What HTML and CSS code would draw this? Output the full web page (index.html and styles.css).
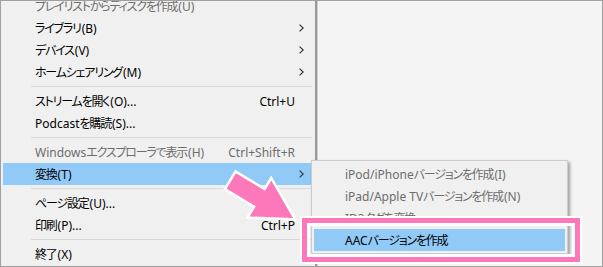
FILE: index.html
```html
<!DOCTYPE html>
<html lang="ja">
<head>
    <meta charset="UTF-8">
    <title>変換メニュー</title>
    <link rel="stylesheet" href="styles.css">
</head>
<body>
    <div class="window">
        <div class="menu">
            <ul class="items">
                <li class="item disabled"><span class="label"><span class="jp">プレイリストからディスクを作成</span>(U)</span><span class="sub"></span></li>
                <li class="item"><span class="label"><span class="jp">ライブラリ</span>(B)</span><span class="sub"><svg width="5" height="8" viewBox="0 0 5 8"><path d="M0.6 0.6 L4.2 4 L0.6 7.4" /></svg></span></li>
                <li class="item"><span class="label"><span class="jp">デバイス</span>(V)</span><span class="sub"><svg width="5" height="8" viewBox="0 0 5 8"><path d="M0.6 0.6 L4.2 4 L0.6 7.4" /></svg></span></li>
                <li class="item"><span class="label"><span class="jp">ホームシェアリング</span>(M)</span><span class="sub"><svg width="5" height="8" viewBox="0 0 5 8"><path d="M0.6 0.6 L4.2 4 L0.6 7.4" /></svg></span></li>
                <li class="sep"></li>
                <li class="item"><span class="label"><span class="jp">ストリームを開く</span>(O)...</span><span class="key">Ctrl+U</span><span class="sub"></span></li>
                <li class="item"><span class="label">Podcast<span class="jp">を購読</span>(S)...</span><span class="sub"></span></li>
                <li class="sep"></li>
                <li class="item disabled"><span class="label">Windows<span class="jp">エクスプローラで表示</span>(H)</span><span class="key">Ctrl+Shift+R</span><span class="sub"></span></li>
                <li class="item active"><span class="label"><span class="jp">変換</span>(T)</span><span class="sub"><svg width="5" height="8" viewBox="0 0 5 8"><path d="M0.6 0.6 L4.2 4 L0.6 7.4" /></svg></span></li>
                <li class="sep"></li>
                <li class="item"><span class="label"><span class="jp">ページ設定</span>(U)...</span><span class="sub"></span></li>
                <li class="item"><span class="label"><span class="jp">印刷</span>(P)...</span><span class="key">Ctrl+P</span><span class="sub"></span></li>
                <li class="sep"></li>
                <li class="item"><span class="label"><span class="jp">終了</span>(X)</span><span class="sub"></span></li>
            </ul>
        </div>
        <div class="pane"></div>

        <ul class="submenu">
            <li class="item disabled"><span class="label">iPod/iPhone<span class="jp">バージョンを作成</span>(I)</span></li>
            <li class="item disabled"><span class="label">iPad/Apple TV<span class="jp">バージョンを作成</span>(N)</span></li>
            <li class="item disabled"><span class="label">ID3<span class="jp">タグを変換</span></span></li>
            <li class="item active"><span class="label">AAC<span class="jp">バージョンを作成</span></span></li>
        </ul>

        <div class="callout"></div>

        <svg class="pointer" width="90" height="65" viewBox="0 0 90 65">
            <polygon points="0,0 -38,-21 -38,-9 -72,-9 -72,9 -38,9 -38,21" transform="translate(78 53) rotate(31)" />
        </svg>
    </div>
</body>
</html>
```

FILE: styles.css
```css
body {
    margin: 0;
    font-family: "Noto Sans", "Noto Sans CJK JP", sans-serif;
    font-size: 12px;
    font-feature-settings: "palt";
    color: #000000;
}

.window {
    position: relative;
    display: flex;
    width: 603px;
    height: 267px;
    box-sizing: border-box;
    border: 1px solid #a0a0a0;
    background-color: #f4f4f4;
    overflow: hidden;
}

.menu {
    flex: none;
    width: 316px;
    box-sizing: border-box;
    padding: 0 2px;
    background-color: #f0f0f0;
    border-right: 2px solid #9a9a9a;
    box-shadow: 1px 0 0 #cfcfcf;
}

.pane {
    flex: 1;
}

.items {
    list-style: none;
    margin: -6px 0 0;
    padding: 0;
}

.item {
    display: flex;
    align-items: center;
    height: 22px;
    padding: 0 9px 0 32px;
    white-space: nowrap;
}

.item .label {
    flex: 1;
}

/* kana in the Windows UI font run narrower than Noto's */
.jp {
    letter-spacing: -1.2px;
    margin-right: 1px;
}

.item .sub {
    display: flex;
    justify-content: flex-end;
    width: 9px;
}

.item .sub path {
    fill: none;
    stroke: #333333;
    stroke-width: 1.2;
}

.item.active {
    background-color: #91c9f7;
}

.item.disabled {
    color: #6d6d6d;
}

.sep {
    height: 1px;
    margin: 3px 1px 3px 28px;
    background-color: #d7d7d7;
}

.submenu {
    position: absolute;
    left: 310px;
    top: 159px;
    width: 257px;
    box-sizing: border-box;
    margin: 0;
    padding: 2px;
    list-style: none;
    background-color: #f0f0f0;
    border: 1px solid #cccccc;
    box-shadow: 2px 2px 3px rgba(0, 0, 0, 0.35);
}

.submenu .item {
    padding-left: 31px;
}

.callout {
    position: absolute;
    left: 301px;
    top: 217px;
    width: 278px;
    height: 44px;
    box-sizing: border-box;
    border: 5px solid #fd78ba;
    box-shadow: 0 0 0 2px #ffffff, inset 0 0 0 3px #ffffff;
}

.pointer {
    position: absolute;
    left: 214px;
    top: 164px;
    overflow: visible;
}

.pointer polygon {
    fill: #fd78ba;
    stroke: #ffffff;
    stroke-width: 5;
    stroke-linejoin: miter;
    paint-order: stroke;
}
```
